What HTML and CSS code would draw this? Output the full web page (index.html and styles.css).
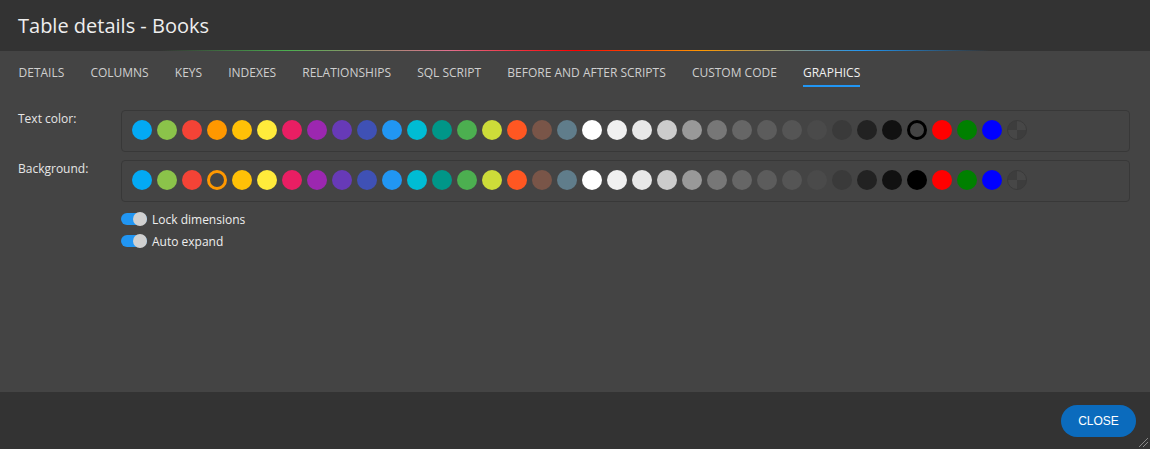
FILE: index.html
```html
<!DOCTYPE html>
<html>
<head>
<meta charset="utf-8">
<link rel="stylesheet" href="styles.css">
</head>
<body>
<div class="dialog">
  <header class="header">
    <h1 class="title">Table details - Books</h1>
  </header>
  <div class="rainbow"></div>
  <main class="body">
    <nav class="tabs">
      <span class="tab">DETAILS</span>
      <span class="tab">COLUMNS</span>
      <span class="tab">KEYS</span>
      <span class="tab">INDEXES</span>
      <span class="tab">RELATIONSHIPS</span>
      <span class="tab">SQL SCRIPT</span>
      <span class="tab">BEFORE AND AFTER SCRIPTS</span>
      <span class="tab">CUSTOM CODE</span>
      <span class="tab active">GRAPHICS</span>
    </nav>
    <div class="form">
      <div class="label">Text color:</div>
      <div class="palette" data-selected="31"></div>
      <div class="label">Background:</div>
      <div class="palette" data-selected="3"></div>
      <div></div>
      <div class="toggles">
        <label class="toggle-row"><span class="switch"><span class="knob"></span></span><span class="toggle-text">Lock dimensions</span></label>
        <label class="toggle-row"><span class="switch"><span class="knob"></span></span><span class="toggle-text">Auto expand</span></label>
      </div>
    </div>
  </main>
  <footer class="footer">
    <button class="close-btn">CLOSE</button>
    <span class="grip"></span>
  </footer>
</div>
<script>
(function(){
  var colors = ["#03a9f4","#8bc34a","#f44336","#ff9800","#ffc107","#ffeb3b","#e91e63","#9c27b0","#673ab7","#3f51b5","#2196f3","#00bcd4","#009688","#4caf50","#cddc39","#ff5722","#795548","#607d8b","#ffffff","#f0f0f0","#e8e8e8","#cccccc","#999999","#777777","#666666","#5c5c5c","#555555","#4a4a4a","#3a3a3a","#222222","#111111","#000000","#ff0000","#008000","#0000ff"];
  var pals = document.querySelectorAll('.palette');
  pals.forEach(function(p){
    var sel = parseInt(p.getAttribute('data-selected'),10);
    colors.forEach(function(c,i){
      var d = document.createElement('span');
      d.className = 'swatch' + (i===sel ? ' selected' : '');
      if (i===sel) d.style.borderColor = c; else d.style.background = c;
      p.appendChild(d);
    });
    var t = document.createElement('span');
    t.className = 'swatch transparent';
    p.appendChild(t);
  });
})();
</script>
</body>
</html>
```
FILE: styles.css
```css
* { box-sizing: border-box; }
html, body { margin: 0; padding: 0; }
body {
  width: 1150px;
  height: 449px;
  background: #333333;
  font-family: "Open Sans", "Noto Sans", sans-serif;
  overflow: hidden;
}
.dialog {
  display: flex;
  flex-direction: column;
  height: 449px;
}
.header {
  height: 50px;
  background: #333333;
  padding: 0 18px;
  display: flex;
  align-items: center;
}
.title {
  margin: 0;
  font-weight: 400;
  font-size: 20px;
  color: #eeeeee;
  letter-spacing: 0;
}
.rainbow {
  height: 1px;
  background: linear-gradient(to right, rgba(76,175,80,0) 14%, #4caf50 25%, #e0708e 39%, #ff0000 50%, #ff9800 61%, #2196f3 75%, rgba(33,150,243,0) 86%);
  background-color: #333;
}
.body {
  flex: 1;
  background: #444444;
  padding: 0 20px 0 18px;
}
.tabs {
  display: flex;
  gap: 26.1px;
  height: 36px;
  padding-top: 14px;
  padding-left: 0.5px;
}
.tab {
  font-size: 12px;
  color: #cfcfcf;
  line-height: 16px;
  height: 22px;
  white-space: nowrap;
}
.tab.active {
  color: #f0f0f0;
  border-bottom: 2px solid #2196f3;
}
.form {
  display: grid;
  grid-template-columns: 103px 1fr;
  row-gap: 8px;
  margin-top: 23px;
}
.label {
  font-size: 12px;
  color: #e6e6e6;
  padding-top: 1px;
  line-height: 16px;
}
.palette {
  border: 1px solid #383838;
  border-radius: 4px;
  padding: 9px 10px;
  display: flex;
  gap: 5px;
  height: 42px;
}
.swatch {
  width: 20px;
  height: 20px;
  border-radius: 50%;
  flex: none;
}
.swatch.selected {
  border: 3px solid;
  background: transparent;
}
.swatch.transparent {
  border: 1px solid #3a3a3a;
  background: conic-gradient(#474747 0 25%, #3d3d3d 0 50%, #474747 0 75%, #3d3d3d 0 100%);
}
.toggles {
  display: flex;
  flex-direction: column;
  gap: 8px;
  margin-top: 2px;
}
.toggle-row {
  display: flex;
  align-items: center;
  height: 14px;
}
.switch {
  position: relative;
  width: 26px;
  height: 12px;
  border-radius: 6px;
  background: #2196f3;
  margin-right: 5px;
}
.knob {
  position: absolute;
  right: 0;
  top: -1px;
  width: 14px;
  height: 14px;
  border-radius: 50%;
  background: #d0d0d0;
}
.toggle-text {
  font-size: 12px;
  color: #eeeeee;
}
.footer {
  height: 57px;
  background: #333333;
  display: flex;
  align-items: center;
  justify-content: flex-end;
  padding-right: 14px;
  position: relative;
}
.close-btn {
  width: 75px;
  height: 32px;
  border: none;
  border-radius: 16px;
  background: #0b6bbd;
  color: #ffffff;
  font-family: "Liberation Sans", Arial, sans-serif;
  font-size: 12px;
  padding: 0;
}
.grip {
  position: absolute;
  right: 2px;
  bottom: 2px;
  width: 9px;
  height: 9px;
  background: linear-gradient(135deg, transparent 0 45%, #888 45% 52%, transparent 52% 70%, #888 70% 77%, transparent 77%);
}
```
